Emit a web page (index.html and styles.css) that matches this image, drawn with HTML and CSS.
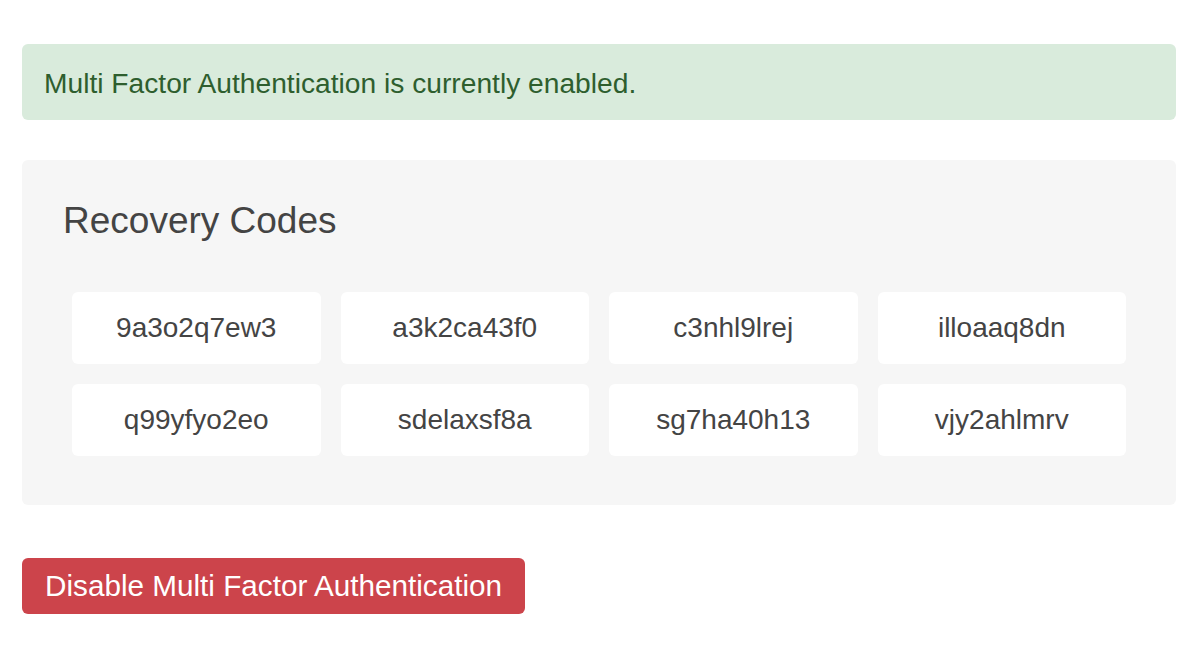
FILE: index.html
```html
<!DOCTYPE html>
<html>
<head>
<meta charset="utf-8">
<link rel="stylesheet" href="styles.css">
</head>
<body>
<div class="page">
  <div class="alert">Multi Factor Authentication is currently enabled.</div>
  <div class="panel">
    <h3 class="panel-title">Recovery Codes</h3>
    <div class="codes">
      <div class="code">9a3o2q7ew3</div>
      <div class="code">a3k2ca43f0</div>
      <div class="code">c3nhl9lrej</div>
      <div class="code">illoaaq8dn</div>
      <div class="code">q99yfyo2eo</div>
      <div class="code">sdelaxsf8a</div>
      <div class="code">sg7ha40h13</div>
      <div class="code">vjy2ahlmrv</div>
    </div>
  </div>
  <button class="btn-danger">Disable Multi Factor Authentication</button>
</div>
</body>
</html>
```
FILE: styles.css
```css
html, body {
  margin: 0;
  padding: 0;
  background: #ffffff;
  font-family: "Liberation Sans", Arial, Helvetica, sans-serif;
}
.page {
  padding: 44px 24px 0 22px;
  display: flex;
  flex-direction: column;
  align-items: flex-start;
}
.alert {
  align-self: stretch;
  box-sizing: border-box;
  height: 76px;
  background: #d9ebdc;
  color: #2e5e2e;
  border-radius: 6px;
  padding: 1px 22px 0 22px;
  font-size: 28.2px;
  line-height: 76px;
}
.panel {
  align-self: stretch;
  margin-top: 40px;
  background: #f6f6f6;
  border-radius: 6px;
  padding: 40px 50px 49px 50px;
}
.panel-title {
  margin: 0 0 0 -9px;
  font-weight: normal;
  font-size: 37px;
  line-height: 42px;
  color: #444444;
}
.codes {
  margin-top: 50px;
  display: grid;
  grid-template-columns: repeat(4, 1fr);
  column-gap: 20px;
  row-gap: 20px;
}
.code {
  height: 72px;
  background: #ffffff;
  border-radius: 6px;
  display: flex;
  align-items: center;
  justify-content: center;
  font-size: 28px;
  color: #444444;
}
.btn-danger {
  margin-top: 53px;
  height: 56px;
  padding: 0 23px;
  border: none;
  border-radius: 6px;
  background: #cc444b;
  color: #ffffff;
  font-family: "Liberation Sans", Arial, Helvetica, sans-serif;
  font-size: 29.7px;
}
```
